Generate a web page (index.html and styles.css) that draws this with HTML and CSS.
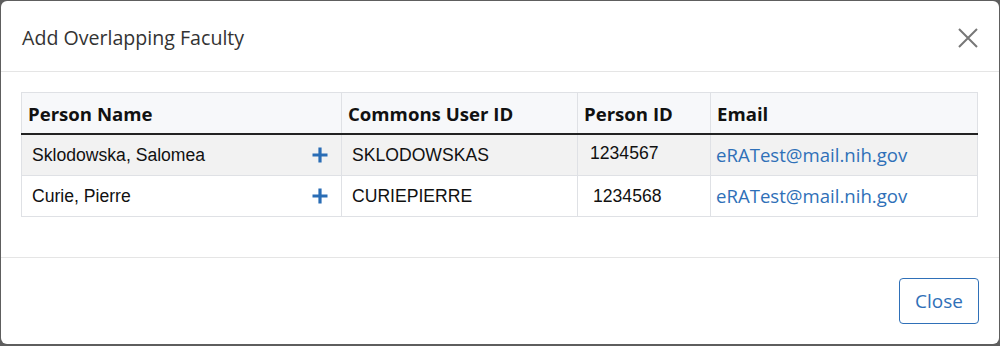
FILE: index.html
```html
<!DOCTYPE html>
<html lang="en">

<head>
    <meta charset="UTF-8">
    <meta name="viewport" content="width=device-width, initial-scale=1.0">
    <title>Add Overlapping Faculty</title>
    <link rel="stylesheet" href="styles.css">
</head>

<body>
    <!-- Modal -->
    <div class="modal">
        <div class="modal-header">
            <h4 class="modal-title">Add Overlapping Faculty</h4>
            <button class="close-x" aria-label="Close">
                <svg width="22" height="22" viewBox="0 0 22 22">
                    <path d="M2 2L20 20M20 2L2 20" stroke="#777" stroke-width="2" fill="none" />
                </svg>
            </button>
        </div>

        <div class="modal-body">
            <table class="faculty-table">
                <thead>
                    <tr>
                        <th class="col-name">Person Name</th>
                        <th class="col-user">Commons User ID</th>
                        <th class="col-id">Person ID</th>
                        <th class="col-email">Email</th>
                    </tr>
                </thead>
                <tbody>
                    <tr class="row-striped">
                        <td>
                            <div class="name-cell">
                                <span>Sklodowska, Salomea</span>
                                <svg class="plus" width="16" height="16" viewBox="0 0 16 16">
                                    <path d="M8 0.5V15.5M0.5 8H15.5" stroke="currentColor" stroke-width="3.2" />
                                </svg>
                            </div>
                        </td>
                        <td class="user-id">SKLODOWSKAS</td>
                        <td class="person-id first">1234567</td>
                        <td class="email"><a href="#">eRATest@mail.nih.gov</a></td>
                    </tr>
                    <tr>
                        <td>
                            <div class="name-cell">
                                <span>Curie, Pierre</span>
                                <svg class="plus" width="16" height="16" viewBox="0 0 16 16">
                                    <path d="M8 0.5V15.5M0.5 8H15.5" stroke="currentColor" stroke-width="3.2" />
                                </svg>
                            </div>
                        </td>
                        <td class="user-id">CURIEPIERRE</td>
                        <td class="person-id">1234568</td>
                        <td class="email"><a href="#">eRATest@mail.nih.gov</a></td>
                    </tr>
                </tbody>
            </table>
        </div>

        <div class="modal-footer">
            <button class="btn-close">Close</button>
        </div>
    </div>
</body>

</html>
```

FILE: styles.css
```css
body {
    margin: 0;
    background-color: #5e5e5e;
    font-family: "Open Sans", "Noto Sans", sans-serif;
    color: #333;
}

/* Janela do modal */
.modal {
    margin: 1px 1px 0 1px;
    height: 343px;
    background-color: #fff;
    border-radius: 6px;
    display: flex;
    flex-direction: column;
    overflow: hidden;
}

.modal-header {
    height: 70px;
    flex-shrink: 0;
    display: flex;
    align-items: center;
    justify-content: space-between;
    padding: 0 20px 0 21px;
    border-bottom: 1px solid #e5e5e5;
}

.modal-title {
    margin: 0;
    font-size: 19.6px;
    font-weight: 500;
    line-height: 26px;
    color: #333;
    padding-top: 3px;
}

.close-x {
    background: none;
    border: none;
    padding: 0;
    margin-top: 3px;
    display: flex;
    cursor: pointer;
}

.modal-body {
    padding: 20px 20px 0 20px;
    flex: 1;
}

/* Tabela */
.faculty-table {
    width: 957px;
    border-collapse: collapse;
    margin-bottom: 20px;
}

.faculty-table th {
    height: 41px;
    padding: 2px 6px 0 6px;
    text-align: left;
    font-size: 18.6px;
    line-height: 24px;
    font-weight: 700;
    color: #111;
    background-color: #f7f8fa;
    border: 1px solid #dfe1e5;
    border-bottom: 2px solid #222;
    box-sizing: border-box;
}

.col-name { width: 320px; }
.col-user { width: 236px; }
.col-id { width: 133px; }

.faculty-table td {
    height: 41.5px;
    padding: 0 10px;
    font-family: "Liberation Sans", Arial, sans-serif;
    font-size: 17.6px;
    line-height: 20px;
    color: #111;
    border: 1px solid #dfe1e5;
    border-top: none;
    box-sizing: border-box;
}

.row-striped td {
    background-color: #f2f2f2;
}

.name-cell {
    display: flex;
    align-items: center;
    justify-content: space-between;
    padding-right: 3px;
}

.plus {
    color: #2a6db5;
}

.user-id {
    padding-top: 3px;
}

.faculty-table td.person-id {
    padding-left: 15px;
}

.faculty-table td.person-id.first {
    padding-left: 12px;
    padding-bottom: 3px;
}

.faculty-table td.email {
    padding-left: 5px;
    font-family: "Open Sans", "Noto Sans", sans-serif;
    font-size: 18.6px;
}

.email a {
    color: #2f70b8;
    text-decoration: none;
}

/* Rodape */
.modal-footer {
    border-top: 1px solid #e5e5e5;
    padding: 20px;
    display: flex;
    justify-content: flex-end;
}

.btn-close {
    width: 80px;
    height: 46px;
    background-color: #fff;
    border: 1px solid #2f70b8;
    border-radius: 4px;
    color: #2f70b8;
    font-family: "Open Sans", "Noto Sans", sans-serif;
    font-size: 19px;
    cursor: pointer;
}
```
